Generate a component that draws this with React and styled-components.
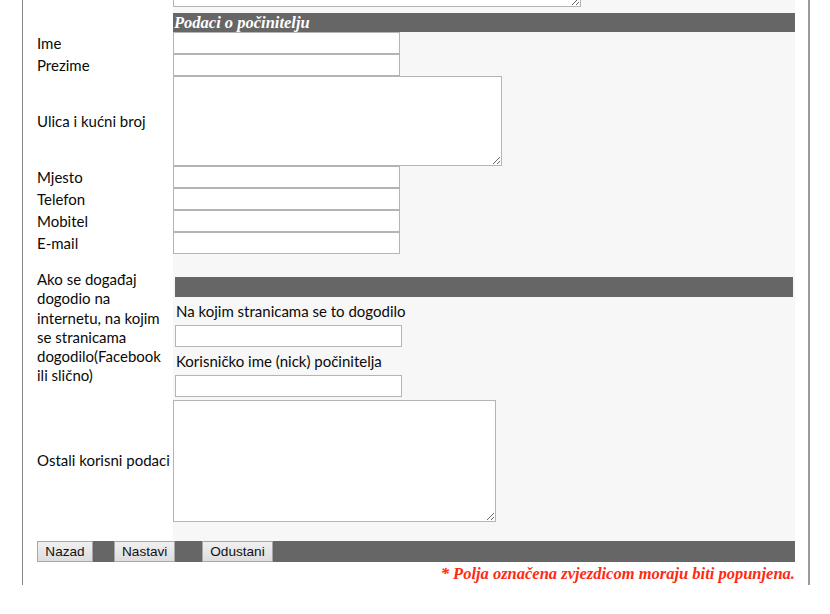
import React from 'react'
import styled, {createGlobalStyle} from 'styled-components'

const Global = createGlobalStyle`
    body {
        margin: 0;
        background: #fff;
        font-family: Lato, "Open Sans", sans-serif;
        font-size: 15px;
        color: #0a0a0a;
    }
`

const Frame = styled.div`
    margin-left: 22px;
    width: 758px;
    height: 585px;
    padding: 0 13px 0 14px;
    border-left: 1px solid #8a8a8a;
    border-right: 2px solid #9a9a9a;
    overflow: hidden;
`

const Row = styled.div`
    display: grid;
    grid-template-columns: 136px 1fr;
    align-items: ${p => p.$align || 'center'};
`

const Label = styled.div`
    line-height: 19.3px;
    padding-top: ${p => p.$pt || 0}px;
`

const Field = styled.div`
    background: #f7f7f7;
    height: ${p => p.$h ? p.$h + 'px' : 'auto'};
    display: flex;
    flex-direction: column;
    align-items: flex-start;
    align-self: stretch;
    justify-content: ${p => p.$justify || 'center'};
`

const Cut = styled.div`
    height: 13px;
    overflow: hidden;
    display: flex;
    align-items: flex-end;
    padding-bottom: 6px;
    box-sizing: border-box;
`

const Heading = styled.div`
    background: #666;
    color: #fff;
    height: 19px;
    font-family: "Liberation Serif", serif;
    font-weight: bold;
    font-style: italic;
    font-size: 16.5px;
    line-height: 19px;
    padding-left: 1px;
    align-self: stretch;
`

const Input = styled.input`
    box-sizing: border-box;
    width: 227px;
    height: 22px;
    margin: 0;
    border: 1px solid #b4b4b4;
    background: #fff;
`

const Area = styled.textarea`
    box-sizing: border-box;
    width: ${p => p.$w}px;
    height: ${p => p.$h}px;
    margin: 0;
    border: 1px solid #b4b4b4;
    background: #fff;
    flex-shrink: 0;
`

const Nested = styled.div`
    align-self: stretch;
    margin-top: 5px;
    padding: 2px;
`

const Bar = styled.div`
    background: #666;
    height: 20px;
`

const SubLabel = styled.div`
    line-height: 20px;
    padding: 4px 0 4px 1px;
`

const Footer = styled.div`
    display: flex;
    background: #666;
    height: 21px;
`

const BtnCell = styled.div`
    width: ${p => p.$w ? p.$w + 'px' : 'auto'};
    flex: ${p => p.$w ? 'none' : 1};
`

const Button = styled.button`
    height: 21px;
    margin: 0;
    padding: 0 7px;
    font-family: Arial, "Liberation Sans", sans-serif;
    font-size: 13.6px;
    color: #111;
    background: linear-gradient(#f0f0f0, #dddddd);
    border: 1px solid #a8a8a8;
    border-radius: 0;
    width: ${p => p.$w}px;
`

const Note = styled.div`
    text-align: right;
    padding-top: 2px;
    color: #ff2a10;
    font-family: "Liberation Serif", serif;
    font-weight: bold;
    font-style: italic;
    font-size: 16.5px;
    line-height: 19px;
`

const Spacer = styled.div`
    height: ${p => p.$h}px;
`

const simple = ['Ime', 'Prezime']
const contact = ['Mjesto', 'Telefon', 'Mobitel', 'E-mail']

export default function App() {
    return (
        <Frame>
            <Global/>
            <Row>
                <div/>
                <Field $h={13} $justify="flex-end">
                    <Cut><Area $w={408} $h={90} style={{marginTop: -83}}/></Cut>
                </Field>
            </Row>
            <Row>
                <div/>
                <Field><Heading>Podaci o počinitelju</Heading></Field>
            </Row>
            {simple.map(name => (
                <Row key={name}>
                    <Label $pt={2}>{name}</Label>
                    <Field><Input/></Field>
                </Row>
            ))}
            <Row>
                <Label $pt={2}>Ulica i kućni broj</Label>
                <Field><Area $w={329} $h={90}/></Field>
            </Row>
            {contact.map(name => (
                <Row key={name}>
                    <Label $pt={2}>{name}</Label>
                    <Field><Input/></Field>
                </Row>
            ))}
            <Row>
                <Spacer $h={16}/>
                <Field/>
            </Row>
            <Row $align="start">
                <Label>Ako se događaj dogodio na internetu, na kojim se stranicama dogodilo(Facebook ili slično)</Label>
                <Field $justify="flex-start">
                    <Nested>
                        <Bar/>
                        <SubLabel>Na kojim stranicama se to dogodilo</SubLabel>
                        <Input/>
                        <SubLabel>Korisničko ime (nick) počinitelja</SubLabel>
                        <Input/>
                    </Nested>
                </Field>
            </Row>
            <Row>
                <Label>Ostali korisni podaci</Label>
                <Field style={{paddingTop: 1}}><Area $w={323} $h={122}/></Field>
            </Row>
            <Row>
                <Spacer $h={19}/>
                <Field/>
            </Row>
            <Footer>
                <BtnCell $w={77}><Button $w={56}>Nazad</Button></BtnCell>
                <BtnCell $w={88}><Button $w={61}>Nastavi</Button></BtnCell>
                <BtnCell><Button $w={71}>Odustani</Button></BtnCell>
            </Footer>
            <Note>* Polja označena zvjezdicom moraju biti popunjena.</Note>
        </Frame>
    )
}
